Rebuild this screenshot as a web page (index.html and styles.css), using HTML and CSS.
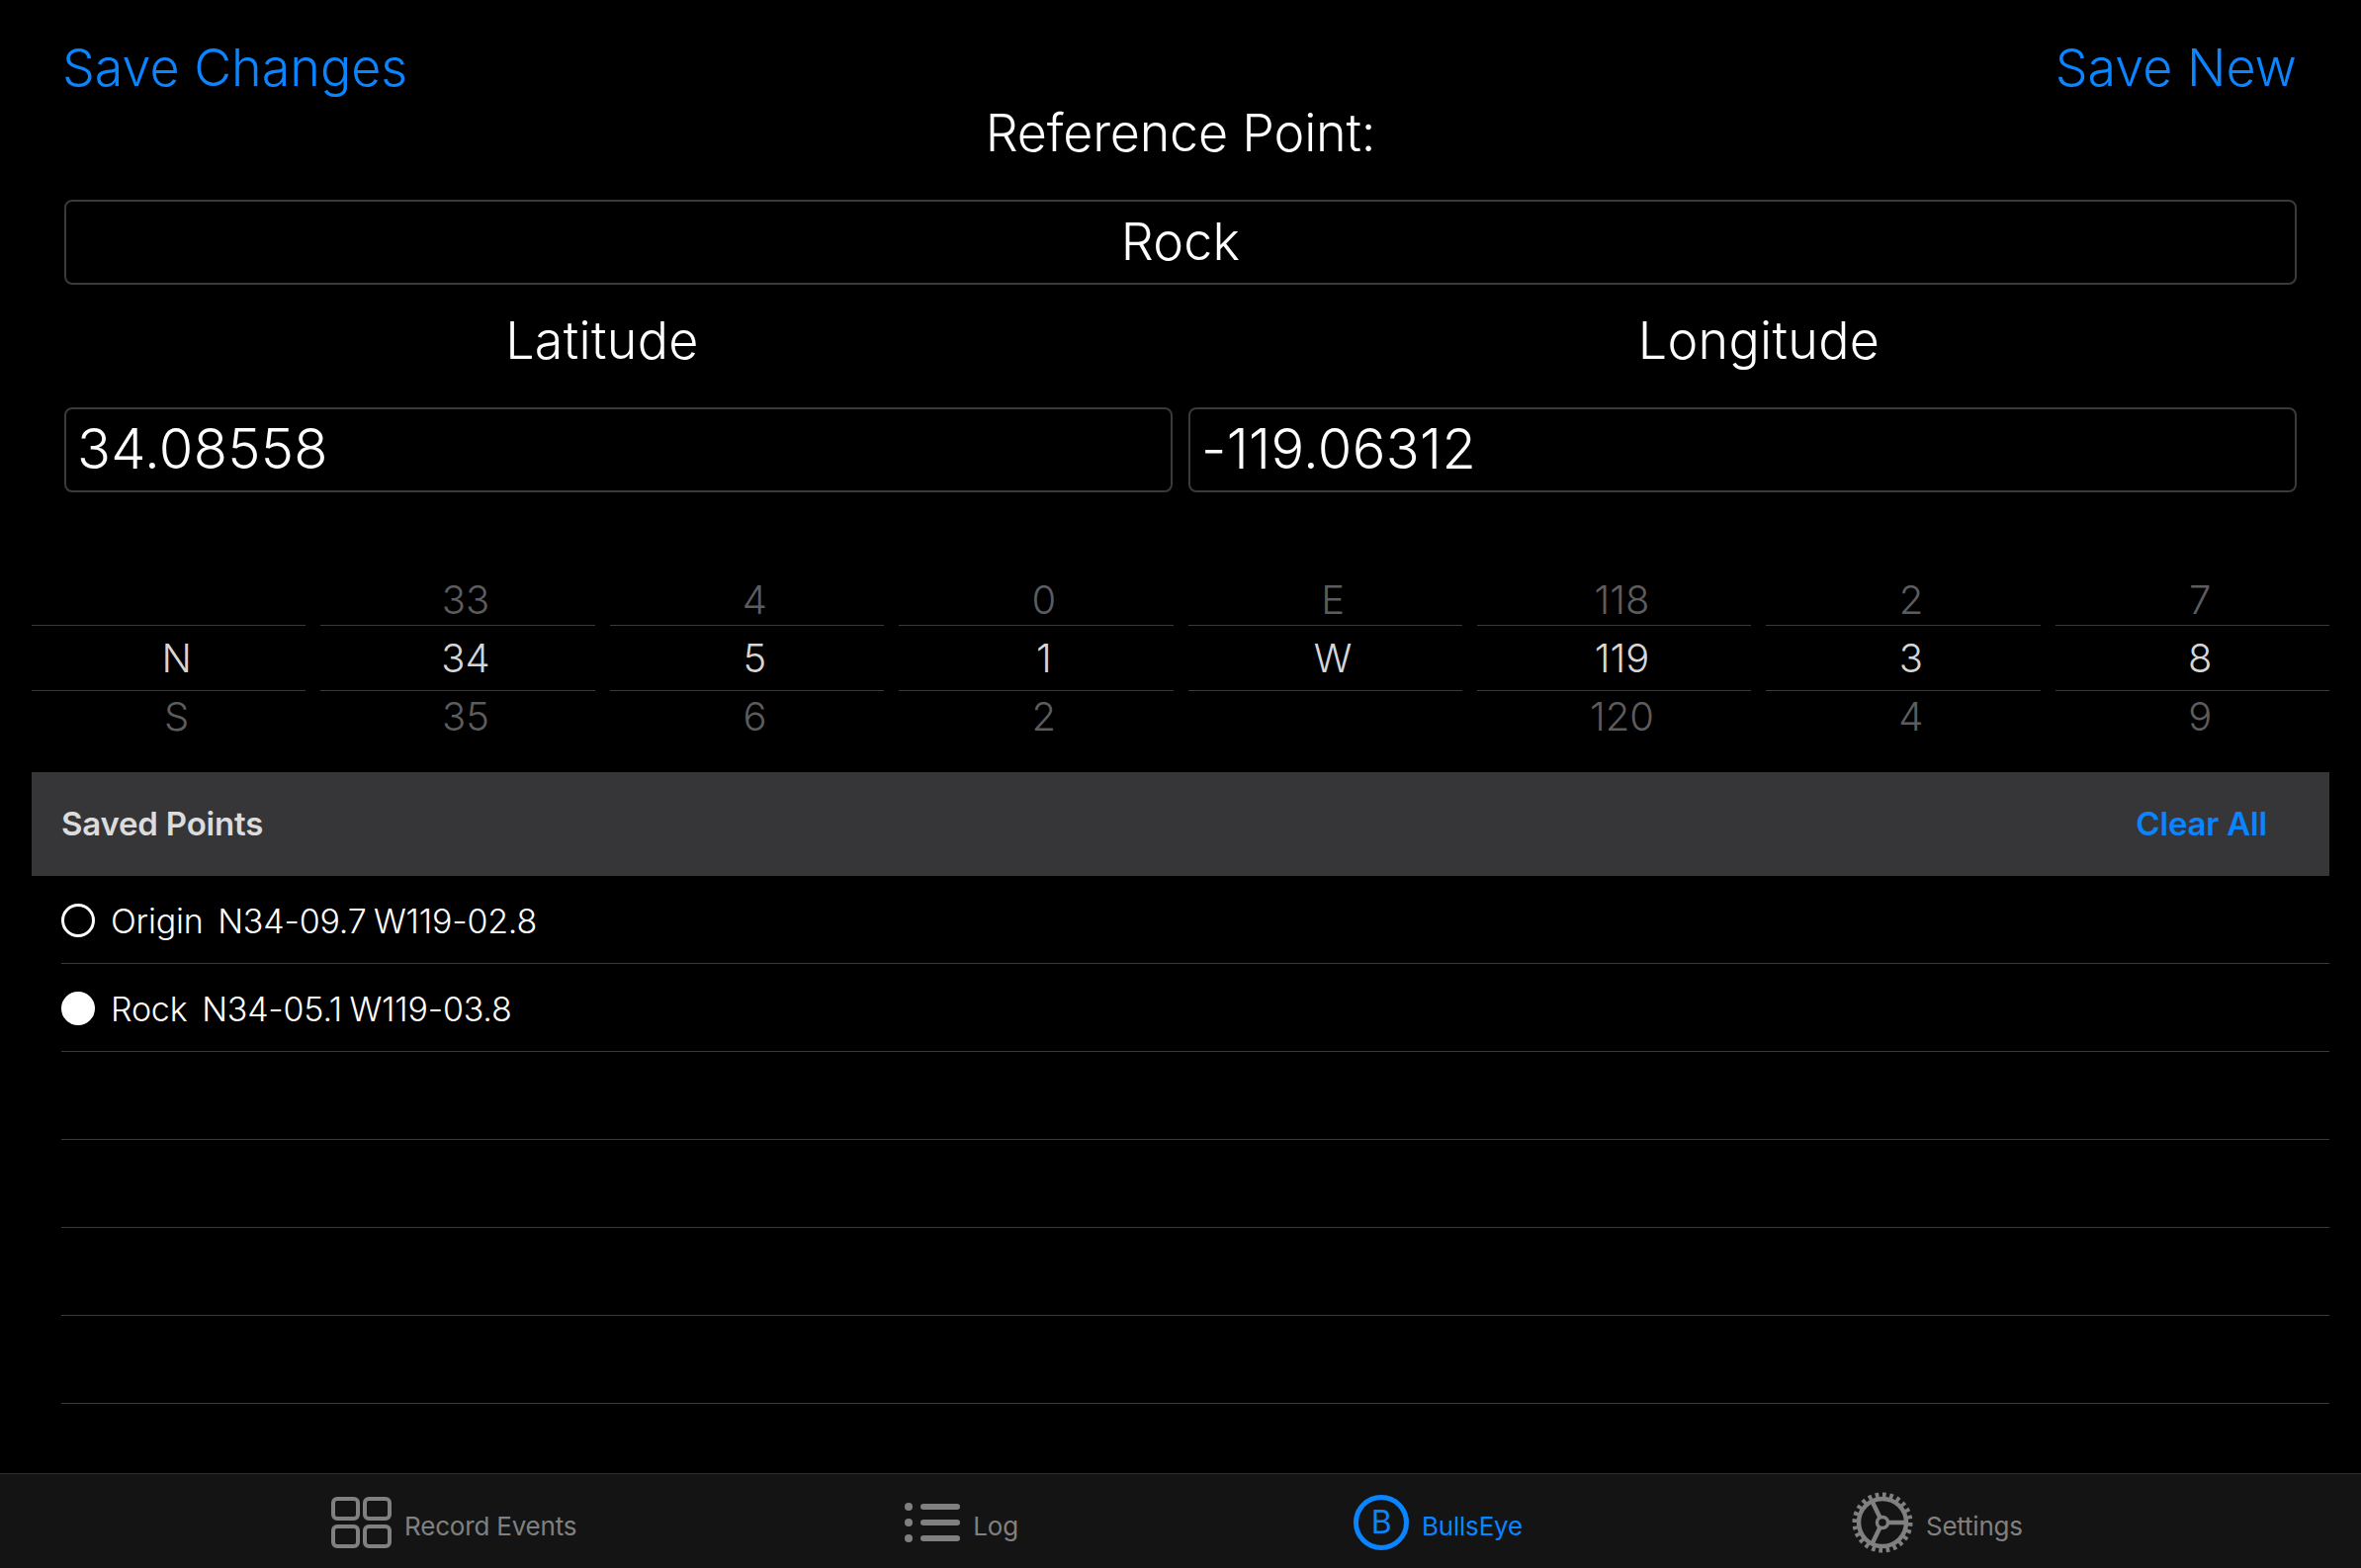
FILE: index.html
```html
<!DOCTYPE html>
<html>
<head>
    <meta charset="UTF-8" />
    <title>BullsEye</title>
    <link rel="stylesheet" href="styles.css">
</head>
<body>
<div class="screen">
    <div class="main">
        <div class="topbar">
            <span class="link">Save Changes</span>
            <span class="link">Save New</span>
        </div>
        <div class="title">Reference Point:</div>
        <div class="field field-name">Rock</div>
        <div class="coord-labels">
            <div class="coord-label">Latitude</div>
            <div class="coord-label">Longitude</div>
        </div>
        <div class="coord-fields">
            <div class="field">34.08558</div>
            <div class="field">-119.06312</div>
        </div>

        <div class="pickers">
            <div class="picker"><div class="cell up"></div><div class="cell sel">N</div><div class="cell down">S</div></div>
            <div class="picker"><div class="cell up">33</div><div class="cell sel">34</div><div class="cell down">35</div></div>
            <div class="picker"><div class="cell up">4</div><div class="cell sel">5</div><div class="cell down">6</div></div>
            <div class="picker"><div class="cell up">0</div><div class="cell sel">1</div><div class="cell down">2</div></div>
            <div class="picker"><div class="cell up">E</div><div class="cell sel">W</div><div class="cell down"></div></div>
            <div class="picker"><div class="cell up">118</div><div class="cell sel">119</div><div class="cell down">120</div></div>
            <div class="picker"><div class="cell up">2</div><div class="cell sel">3</div><div class="cell down">4</div></div>
            <div class="picker"><div class="cell up">7</div><div class="cell sel">8</div><div class="cell down">9</div></div>
        </div>

        <div class="section">
            <span>Saved Points</span>
            <span class="clear">Clear All</span>
        </div>
        <div class="rows">
            <div class="row"><span class="radio"></span>Origin&nbsp; N34-09.7 W119-02.8</div>
            <div class="row"><span class="radio on"></span>Rock&nbsp; N34-05.1 W119-03.8</div>
            <div class="row"></div>
            <div class="row"></div>
            <div class="row"></div>
            <div class="row"></div>
        </div>
    </div>

    <div class="tabbar">
        <div class="tab">
            <svg width="61" height="52" viewBox="0 0 61 52" fill="none" stroke="currentColor" stroke-width="4">
                <rect x="2" y="2" width="25" height="20" rx="4"/>
                <rect x="34" y="2" width="25" height="20" rx="4"/>
                <rect x="2" y="30" width="25" height="20" rx="4"/>
                <rect x="34" y="30" width="25" height="20" rx="4"/>
            </svg>
            <span>Record Events</span>
        </div>
        <div class="tab">
            <svg width="57" height="40" viewBox="0 0 57 40" fill="currentColor">
                <circle cx="5" cy="4" r="4"/><rect x="17" y="1" width="40" height="6" rx="3"/>
                <circle cx="5" cy="20" r="4"/><rect x="17" y="17" width="40" height="6" rx="3"/>
                <circle cx="5" cy="36" r="4"/><rect x="17" y="33" width="40" height="6" rx="3"/>
            </svg>
            <span>Log</span>
        </div>
        <div class="tab active">
            <svg width="56" height="56" viewBox="0 0 56 56" fill="none">
                <circle cx="28" cy="28" r="25.5" stroke="currentColor" stroke-width="5"/>
                <text x="28" y="39" text-anchor="middle" class="tab-b">B</text>
            </svg>
            <span>BullsEye</span>
        </div>
        <div class="tab">
            <svg width="62" height="62" viewBox="0 0 62 62" fill="none" stroke="currentColor">
                <circle cx="31" cy="31" r="24" stroke-width="4.5"/>
                <circle cx="31" cy="31" r="27.5" stroke-width="6" pathLength="48" stroke-dasharray="1 1"/>
                <circle cx="31" cy="31" r="5.5" stroke-width="3.5"/>
                <path d="M37 31H55M28.5 26L20.5 9.5M28.5 36L20.5 52.5" stroke-width="4.5"/>
            </svg>
            <span>Settings</span>
        </div>
    </div>
</div>
</body>
</html>
```

FILE: styles.css
```css
html, body {
    margin: 0;
    background: #000;
}

.screen {
    width: 2388px;
    height: 1586px;
    display: flex;
    flex-direction: column;
    font-family: Inter, "Liberation Sans", sans-serif;
    color: #fff;
    overflow: hidden;
}

.main {
    flex: 1;
    padding: 0 32px;
}

/* top part */
.topbar {
    display: flex;
    justify-content: space-between;
    padding: 34px 33px 0 31px;
    height: 68px;
}
.link {
    font-size: 52px;
    font-weight: 350;
    line-height: 70px;
    color: #0a84ff;
}
.title {
    text-align: center;
    font-size: 52px;
    font-weight: 350;
    line-height: 66px;
    letter-spacing: -0.2px;
}
.field {
    box-sizing: border-box;
    height: 86px;
    border: 2px solid #3a3a3c;
    border-radius: 8px;
    padding: 0 11px;
    font-size: 56px;
    font-weight: 350;
    line-height: 80px;
    letter-spacing: 0.35px;
}
.field-name {
    margin: 34px 33px 0;
    text-align: center;
    font-size: 52px;
    line-height: 82px;
    letter-spacing: 0.2px;
}
.coord-labels {
    display: flex;
    gap: 16px;
}
.coord-label {
    flex: 1;
    height: 124px;
    text-align: center;
    font-size: 52px;
    font-weight: 350;
    line-height: 114px;
    letter-spacing: 0.3px;
}
.coord-fields {
    display: flex;
    gap: 16px;
    padding: 0 33px;
}
.coord-fields .field {
    flex: 1;
}

/* wheels */
.pickers {
    display: flex;
    gap: 15px;
    margin-top: 74px;
}
.picker {
    flex: 1;
}
.cell {
    height: 60px;
    padding-left: 16px;
    text-align: center;
    font-size: 40px;
    font-weight: 350;
    color: #5c5c5e;
}
.cell.up {
    line-height: 70px;
}
.cell.down {
    line-height: 52px;
}
.cell.sel {
    height: 65px;
    line-height: 65px;
    border-top: 1px solid #3a3a3c;
    border-bottom: 1px solid #3a3a3c;
    color: #d6d6d6;
}

/* saved points */
.section {
    display: flex;
    justify-content: space-between;
    align-items: center;
    box-sizing: border-box;
    height: 105px;
    margin-top: 22px;
    padding: 0 63px 2px 30px;
    background: #363638;
    font-size: 33px;
    font-weight: 600;
    letter-spacing: -0.2px;
    color: #dcdcdc;
}
.clear {
    color: #0a84ff;
}
.row {
    box-sizing: border-box;
    display: flex;
    align-items: center;
    gap: 16px;
    height: 89px;
    margin-left: 30px;
    padding-top: 2px;
    border-bottom: 1px solid #3a3a3c;
    font-size: 34px;
    font-weight: 350;
    letter-spacing: -0.2px;
    word-spacing: -2px;
}
.radio {
    box-sizing: border-box;
    width: 34px;
    height: 34px;
    border: 3px solid #fff;
    border-radius: 50%;
}
.radio.on {
    background: #fff;
}

/* bottom tabs */
.tabbar {
    box-sizing: border-box;
    height: 96px;
    display: flex;
    justify-content: center;
    align-items: center;
    gap: 331px;
    padding-right: 7px;
    padding-top: 2px;
    background: #141414;
    border-top: 1px solid #2e2e2e;
    font-size: 26px;
    letter-spacing: -0.2px;
    color: #808080;
}
.tab {
    display: flex;
    align-items: center;
    gap: 13px;
}
.tab span {
    padding-top: 8px;
}
.tab.active {
    margin: 0 2px 0 8px;
    color: #0a84ff;
}
.tab-b {
    font-size: 32px;
    fill: currentColor;
}
```
